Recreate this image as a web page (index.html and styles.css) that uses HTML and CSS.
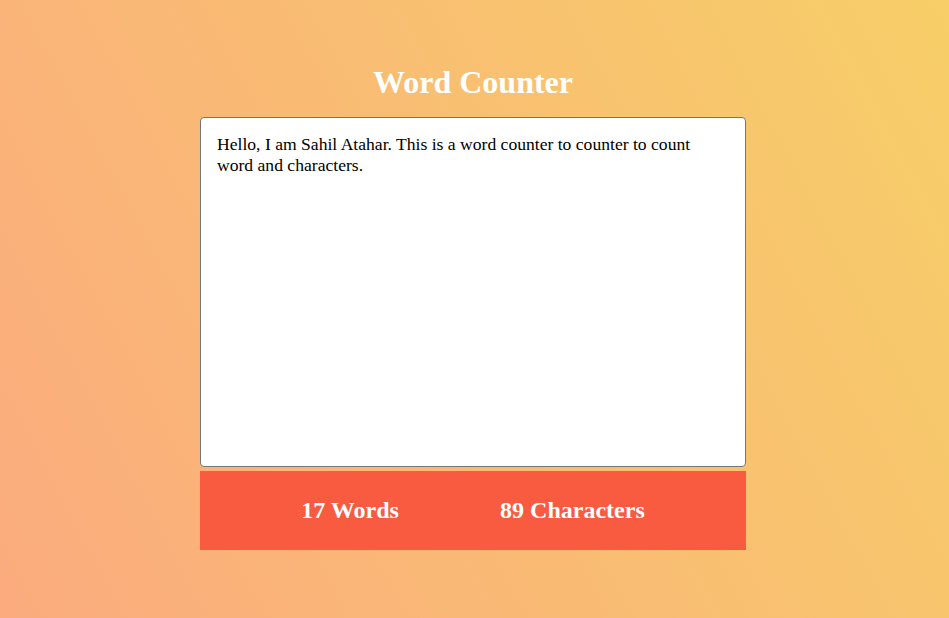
FILE: index.html
```html
<!DOCTYPE html>
<html lang="en">
<head>
<meta charset="utf-8">
<title>Word Counter</title>
<link rel="stylesheet" href="styles.css">
</head>
<body>
<main class="page">
  <h1 class="title">Word Counter</h1>
  <div class="counter">
    <textarea class="input" spellcheck="false">Hello, I am Sahil Atahar. This is a word counter to counter to count word and characters.</textarea>
    <div class="stats">
      <span class="stat">17 Words</span>
      <span class="stat">89 Characters</span>
    </div>
  </div>
</main>
</body>
</html>
```

FILE: styles.css
```css
html, body {
  margin: 0;
  height: 100%;
}

body {
  font-family: "Liberation Serif", "Times New Roman", serif;
  background-color: #fbab7e;
  background-image: linear-gradient(62deg, #fbab7e 0%, #f7ce68 100%);
  min-height: 618px;
}

.page {
  display: flex;
  flex-direction: column;
  align-items: center;
  padding-top: 64px;
  padding-right: 3px;
}

.title {
  margin: 0 0 16px;
  font-size: 32px;
  font-weight: bold;
  color: #ffffff;
  line-height: normal;
}

.counter {
  width: 546px;
  display: flex;
  flex-direction: column;
  gap: 4px;
}

.input {
  box-sizing: border-box;
  width: 546px;
  height: 350px;
  margin: 0;
  padding: 16px;
  border: 1px solid #767676;
  border-radius: 4px;
  background: #ffffff;
  color: #000000;
  font-family: "Liberation Serif", "Times New Roman", serif;
  font-size: 17.6px;
  line-height: normal;
  resize: none;
  outline: none;
  overflow: hidden;
}

.stats {
  height: 79px;
  background: #f95b40;
  display: flex;
  justify-content: space-evenly;
  align-items: center;
}

.stat {
  color: #ffffff;
  font-size: 24px;
  font-weight: bold;
}
```
